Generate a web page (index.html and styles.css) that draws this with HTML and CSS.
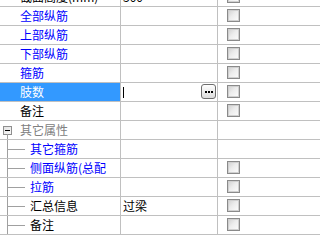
FILE: index.html
```html
<!DOCTYPE html>
<html>
<head>
<meta charset="utf-8">
<link rel="stylesheet" href="styles.css">
</head>
<body>
<div class="grid">
  <div class="row"><div class="name black">截面高度(mm)</div><div class="val">300</div><div class="chk"><span class="cb"></span></div></div>
  <div class="row"><div class="name">全部纵筋</div><div class="val"></div><div class="chk"><span class="cb"></span></div></div>
  <div class="row"><div class="name">上部纵筋</div><div class="val"></div><div class="chk"><span class="cb"></span></div></div>
  <div class="row"><div class="name">下部纵筋</div><div class="val"></div><div class="chk"><span class="cb"></span></div></div>
  <div class="row"><div class="name">箍筋</div><div class="val"></div><div class="chk"><span class="cb"></span></div></div>
  <div class="row selected"><div class="name">肢数</div><div class="val edit"><span class="caret"></span><span class="dots"><i></i><i></i><i></i></span></div><div class="chk"><span class="cb"></span></div></div>
  <div class="row"><div class="name black">备注</div><div class="val"></div><div class="chk"><span class="cb"></span></div></div>
  <div class="row group"><div class="name"><span class="toggle"></span>其它属性</div><div class="val"></div><div class="chk"></div></div>
  <div class="row sub"><div class="name">其它箍筋</div><div class="val"></div><div class="chk"></div></div>
  <div class="row sub"><div class="name">侧面纵筋(总配</div><div class="val"></div><div class="chk"><span class="cb"></span></div></div>
  <div class="row sub"><div class="name">拉筋</div><div class="val"></div><div class="chk"><span class="cb"></span></div></div>
  <div class="row sub"><div class="name black">汇总信息</div><div class="val">过梁</div><div class="chk"><span class="cb"></span></div></div>
  <div class="row sub"><div class="name black">备注</div><div class="val"></div><div class="chk"><span class="cb"></span></div></div>
</div>
</body>
</html>
```
FILE: styles.css
```css
html, body {
  margin: 0;
  padding: 0;
  background: #fff;
  overflow: hidden;
}
body {
  font-family: "Noto Sans CJK SC", "Liberation Sans", sans-serif;
  font-size: 12px;
  line-height: 18px;
  color: #000;
}
.grid {
  margin-top: -12px;
}
.row {
  display: flex;
  height: 18px;
  border-bottom: 1px solid #c0c0c0;
}
.name {
  box-sizing: border-box;
  width: 121px;
  flex: none;
  border-right: 1px solid #c0c0c0;
  padding-left: 20px;
  color: #0000ff;
  white-space: nowrap;
  overflow: hidden;
}
.name.black {
  color: #000;
}
.val {
  box-sizing: border-box;
  width: 97px;
  flex: none;
  border-right: 1px solid #c0c0c0;
  padding-left: 2px;
  white-space: nowrap;
  overflow: hidden;
}
.chk {
  flex: 1;
  padding: 2px 0 0 9px;
}
.cb {
  display: block;
  box-sizing: border-box;
  width: 13px;
  height: 13px;
  border: 1px solid #8a8a8a;
  box-shadow: inset 0 0 0 1px #d0d0d0;
  background: linear-gradient(135deg, #cfcfcf 0%, #ececec 45%, #fdfdfd 100%);
}
.selected .name {
  background: #3399ff;
  color: #fff;
}
.edit {
  display: flex;
  align-items: center;
  justify-content: space-between;
  padding-right: 1px;
}
.caret {
  width: 1px;
  height: 11px;
  background: #000;
}
.dots {
  box-sizing: border-box;
  align-self: flex-start;
  margin-top: 1px;
  width: 15px;
  height: 15px;
  border: 1px solid #6e6e6e;
  border-radius: 3px;
  background: linear-gradient(#ffffff, #dcdcdc);
  display: flex;
  align-items: center;
  justify-content: center;
  gap: 1px;
}
.dots i {
  display: block;
  width: 2px;
  height: 2px;
  background: #000;
}
.group .name {
  position: relative;
  display: flex;
  align-items: center;
  padding-left: 3px;
  color: #808080;
}
.toggle {
  position: relative;
  box-sizing: border-box;
  width: 9px;
  height: 9px;
  margin-right: 8px;
  border: 1px solid #8f8f8f;
  background: linear-gradient(135deg, #e4e4e4, #f8f8f8);
  flex: none;
}
.toggle::before {
  content: "";
  position: absolute;
  left: 1px;
  top: 3px;
  width: 5px;
  height: 1px;
  background: #000;
}
.group .name::after {
  content: "";
  position: absolute;
  left: 7px;
  top: 13px;
  bottom: -1px;
  border-left: 1px solid #a0a0a0;
}
.sub .name {
  position: relative;
  padding-left: 30px;
}
.sub .name::before {
  content: "";
  position: absolute;
  left: 7px;
  top: 0;
  bottom: -1px;
  border-left: 1px solid #a0a0a0;
}
.sub .name::after {
  content: "";
  position: absolute;
  left: 8px;
  top: 9px;
  width: 17px;
  border-top: 1px solid #a0a0a0;
}
```
